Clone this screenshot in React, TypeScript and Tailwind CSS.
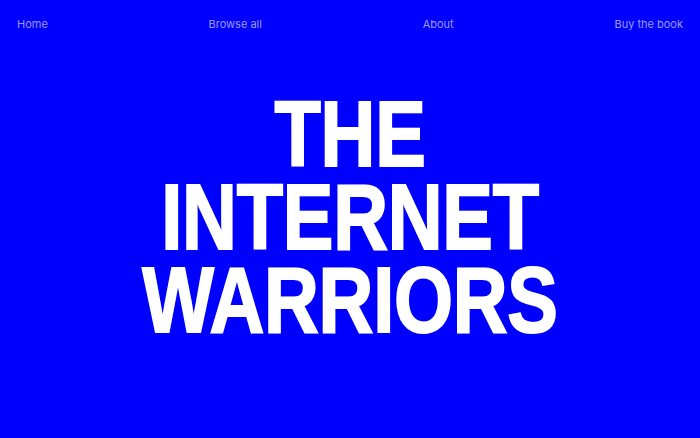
export default function App() {
  return (
    <div className="w-[700px] h-[438px] bg-[#0000ff] flex flex-col overflow-hidden">
      <nav className="flex justify-between items-center px-[17px] pt-[17px] text-[11px] leading-[14px] text-[#9a9cff] font-['Inter','Liberation_Sans',sans-serif]">
        <span>Home</span>
        <span>Browse all</span>
        <span>About</span>
        <span>Buy the book</span>
      </nav>
      <h1 className="mt-[62px] text-center text-white font-bold text-[92px] leading-[83px] uppercase scale-x-[0.825] origin-center tracking-[-0.3px] [-webkit-text-stroke:2px_white] font-['Liberation_Sans',Arial,sans-serif]">
        <div>THE</div>
        <div>INTERNET</div>
        <div>WARRIORS</div>
      </h1>
    </div>
  );
}
